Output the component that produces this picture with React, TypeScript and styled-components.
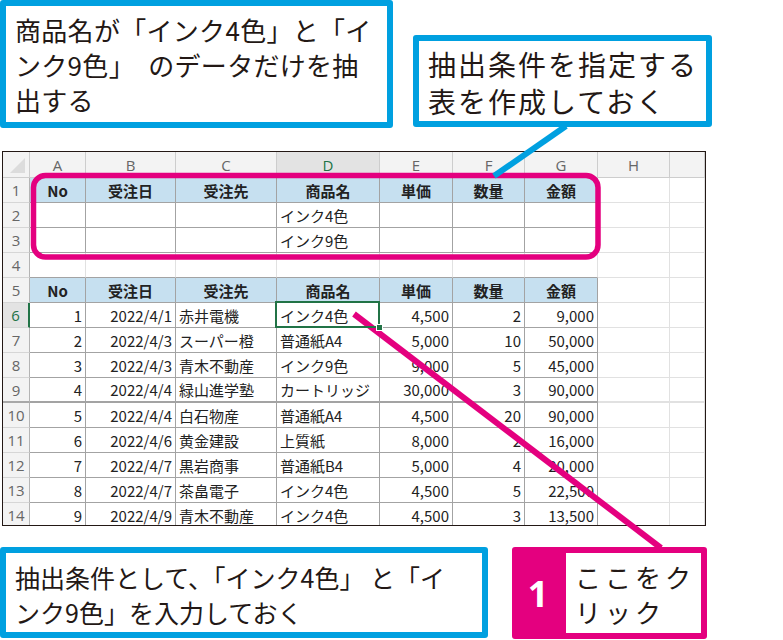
import React from "react";
import styled, { createGlobalStyle, css } from "styled-components";

const BLUE = "#00a0e0";
const PINK = "#e4007f";
const INK = "#231815";
const GREEN = "#217346";
const TABLE_LINE = "#a3a3a3";
const GRID_LINE = "#e1e1e1";
const HEAD_LINE = "#cdcdcd";

const GlobalStyle = createGlobalStyle`
  html, body { margin: 0; padding: 0; background: #ffffff; }
  body { font-family: "Noto Sans CJK JP", "Noto Sans", sans-serif; color: ${INK}; }
`;

const Page = styled.div`
  position: relative;
  width: 783px;
  height: 640px;
  overflow: hidden;
  display: flex;
  flex-direction: column;
`;

const TopRow = styled.div`
  display: flex;
  align-items: flex-start;
  gap: 20px;
  height: 128px;
`;

const BottomRow = styled.div`
  display: flex;
  align-items: flex-start;
  gap: 24px;
  margin-top: 21px;
`;

const Callout = styled.div<{
  $w: number;
  $h: number;
  $top?: number;
  $size: number;
  $lh: number;
  $pt: number;
  $ls?: number;
}>`
  box-sizing: border-box;
  flex: none;
  width: ${(p) => p.$w}px;
  height: ${(p) => p.$h}px;
  margin-top: ${(p) => p.$top ?? 0}px;
  padding: ${(p) => p.$pt}px 0 0 9px;
  border: 6px solid ${BLUE};
  border-radius: 3px;
  background: #fff;
  color: ${INK};
  font-family: "Noto Sans CJK JP", sans-serif;
  font-size: ${(p) => p.$size}px;
  line-height: ${(p) => p.$lh}px;
  letter-spacing: ${(p) => p.$ls ?? 0}px;
  white-space: nowrap;
`;

const StepBox = styled.div`
  box-sizing: border-box;
  flex: none;
  width: 195px;
  height: 92px;
  border: 6px solid ${PINK};
  border-radius: 3px;
  background: #fff;
  display: grid;
  grid-template-columns: 48px 1fr;
`;

const StepNum = styled.div`
  background: ${PINK};
  color: #fff;
  font-family: "Open Sans", "Noto Sans", sans-serif;
  font-weight: 700;
  font-size: 36px;
  display: flex;
  align-items: center;
  justify-content: center;
  padding-right: 8px;
`;

const StepText = styled.div`
  padding: 6px 0 0 9px;
  color: ${INK};
  font-family: "Noto Sans CJK JP", sans-serif;
  font-size: 26px;
  line-height: 35px;
  letter-spacing: 4px;
  white-space: nowrap;
`;

const Sheet = styled.div`
  box-sizing: border-box;
  width: 704px;
  height: 375px;
  margin: 23px 0 0 2px;
  border: 1px solid ${INK};
  overflow: hidden;
  display: grid;
  grid-template-columns: 27px 56px 90px 101px 103px 73px 72px 73px 72px 35px;
  grid-template-rows: 26px repeat(14, 25px);
  background: #fff;
`;

const headFont = css`
  font-family: "Open Sans", "Noto Sans", sans-serif;
  font-size: 15px;
  font-weight: 400;
`;

const Corner = styled.div`
  position: relative;
  box-sizing: border-box;
  background: #f3f3f3;
  border-right: 1px solid ${HEAD_LINE};
  border-bottom: 1px solid ${HEAD_LINE};
  &::after {
    content: "";
    position: absolute;
    right: 4px;
    bottom: 4px;
    width: 0;
    height: 0;
    border-left: 15px solid transparent;
    border-bottom: 15px solid #dcdcdc;
  }
`;

const ColHead = styled.div<{ $active?: boolean }>`
  ${headFont};
  box-sizing: border-box;
  display: flex;
  align-items: center;
  justify-content: center;
  background: ${(p) => (p.$active ? "#e3e3e3" : "#f3f3f3")};
  color: ${(p) => (p.$active ? GREEN : "#666")};
  border-right: 1px solid ${HEAD_LINE};
  border-bottom: 1px solid ${HEAD_LINE};
`;

const RowHead = styled.div<{ $active?: boolean; $thick?: boolean }>`
  ${headFont};
  box-sizing: border-box;
  display: flex;
  align-items: center;
  justify-content: center;
  background: ${(p) => (p.$active ? "#e3e3e3" : "#f3f3f3")};
  color: ${(p) => (p.$active ? GREEN : "#666")};
  border-right: ${(p) => (p.$active ? `2px solid ${GREEN}` : "1px solid #b4b4b4")};
  border-bottom: ${(p) => (p.$thick ? 2 : 1)}px solid ${(p) => (p.$thick ? "#a8a8a8" : "#d6d6d6")};
`;

type Variant = "th" | "td" | "blank";
type Align = "left" | "right" | "center";

const Cell = styled.div<{
  $variant: Variant;
  $align: Align;
  $thick?: boolean;
  $tableBottom?: boolean;
  $selected?: boolean;
}>`
  position: relative;
  box-sizing: border-box;
  display: flex;
  align-items: center;
  justify-content: ${(p) =>
    p.$align === "left" ? "flex-start" : p.$align === "right" ? "flex-end" : "center"};
  padding: 0 3px 0 3px;
  white-space: nowrap;
  font-family: "Noto Sans CJK JP", sans-serif;
  font-size: 15px;
  font-weight: ${(p) => (p.$variant === "th" ? 700 : 400)};
  color: #222;
  background: ${(p) => (p.$variant === "th" ? "#c6e0f0" : "#fff")};
  border-right: 1px solid ${(p) => (p.$variant === "blank" ? GRID_LINE : TABLE_LINE)};
  border-bottom: ${(p) => (p.$thick ? 2 : 1)}px solid
    ${(p) => (p.$variant === "blank" && !p.$tableBottom ? GRID_LINE : TABLE_LINE)};
  ${(p) =>
    p.$selected &&
    css`
      &::after {
        content: "";
        position: absolute;
        left: -2px;
        top: -2px;
        right: -1px;
        bottom: -1px;
        border: 2px solid ${GREEN};
        z-index: 2;
      }
      &::before {
        content: "";
        position: absolute;
        right: -4px;
        bottom: -4px;
        width: 5px;
        height: 5px;
        background: ${GREEN};
        border: 1px solid #fff;
        z-index: 3;
      }
    `}
`;

const Overlay = styled.svg`
  position: absolute;
  left: 0;
  top: 0;
  width: 783px;
  height: 640px;
  pointer-events: none;
`;

const LETTERS = ["A", "B", "C", "D", "E", "F", "G", "H", ""];
const ALIGNS: Align[] = ["right", "right", "left", "left", "right", "right", "right"];
const HEADERS = ["No", "受注日", "受注先", "商品名", "単価", "数量", "金額"];

const DATA: string[][] = [
  ["1", "2022/4/1", "赤井電機", "インク4色", "4,500", "2", "9,000"],
  ["2", "2022/4/3", "スーパー橙", "普通紙A4", "5,000", "10", "50,000"],
  ["3", "2022/4/3", "青木不動産", "インク9色", "9,000", "5", "45,000"],
  ["4", "2022/4/4", "緑山進学塾", "カートリッジ", "30,000", "3", "90,000"],
  ["5", "2022/4/4", "白石物産", "普通紙A4", "4,500", "20", "90,000"],
  ["6", "2022/4/6", "黄金建設", "上質紙", "8,000", "2", "16,000"],
  ["7", "2022/4/7", "黒岩商事", "普通紙B4", "5,000", "4", "20,000"],
  ["8", "2022/4/7", "茶畠電子", "インク4色", "4,500", "5", "22,500"],
  ["9", "2022/4/9", "青木不動産", "インク4色", "4,500", "3", "13,500"],
];

type RowSpec = { kind: "head" | "body" | "gap"; values: string[] };

const ROWS: RowSpec[] = [
  { kind: "head", values: HEADERS },
  { kind: "body", values: ["", "", "", "インク4色", "", "", ""] },
  { kind: "body", values: ["", "", "", "インク9色", "", "", ""] },
  { kind: "gap", values: ["", "", "", "", "", "", ""] },
  { kind: "head", values: HEADERS },
  ...DATA.map((values) => ({ kind: "body" as const, values })),
];

const ACTIVE_ROW = 6;
const ACTIVE_COL = 3;
const THICK_ROW = 9;

function SheetGrid() {
  return (
    <Sheet>
      <Corner />
      {LETTERS.map((l, i) => (
        <ColHead key={`h${i}`} $active={i === ACTIVE_COL}>
          {l}
        </ColHead>
      ))}
      {ROWS.map((row, r) => {
        const rowNo = r + 1;
        const thick = rowNo === THICK_ROW;
        return (
          <React.Fragment key={`r${rowNo}`}>
            <RowHead $active={rowNo === ACTIVE_ROW} $thick={thick}>
              {rowNo}
            </RowHead>
            {row.values.map((v, c) => {
              const variant: Variant =
                row.kind === "head" ? "th" : row.kind === "body" ? "td" : "blank";
              return (
                <Cell
                  key={`c${rowNo}-${c}`}
                  $variant={variant}
                  $align={row.kind === "head" ? "center" : ALIGNS[c]}
                  $thick={thick}
                  $tableBottom={row.kind === "gap"}
                  $selected={rowNo === ACTIVE_ROW && c === ACTIVE_COL}
                >
                  {v}
                </Cell>
              );
            })}
            <Cell $variant="blank" $align="left" $thick={thick} />
            <Cell $variant="blank" $align="left" $thick={thick} />
          </React.Fragment>
        );
      })}
    </Sheet>
  );
}

export default function App() {
  return (
    <>
      <GlobalStyle />
      <Page>
        <TopRow>
          <Callout $w={393} $h={128} $size={26} $lh={35} $pt={6} $ls={0.3}>
            商品名が「インク4色」と「イ
            <br />
            ンク9色」　のデータだけを抽
            <br />
            出する
          </Callout>
          <Callout $w={299} $h={92} $top={35} $size={28} $lh={37} $pt={5} $ls={2}>
            抽出条件を指定する
            <br />
            表を作成しておく
          </Callout>
        </TopRow>
        <SheetGrid />
        <BottomRow>
          <Callout $w={488} $h={91} $size={25} $lh={35} $pt={7} $ls={0}>
            抽出条件として、「インク4色」 と「イ
            <br />
            ンク9色」を入力しておく
          </Callout>
          <StepBox>
            <StepNum>1</StepNum>
            <StepText>
              ここをク
              <br />
              リック
            </StepText>
          </StepBox>
        </BottomRow>
        <Overlay viewBox="0 0 783 640">
          <rect
            x={33.5}
            y={175.5}
            width={564.5}
            height={81.5}
            rx={12}
            fill="none"
            stroke={PINK}
            strokeWidth={5.5}
          />
          <line x1={566} y1={126} x2={494} y2={176} stroke={BLUE} strokeWidth={6} />
          <line x1={354} y1={314} x2={661} y2={548} stroke={PINK} strokeWidth={6} />
        </Overlay>
      </Page>
    </>
  );
}
